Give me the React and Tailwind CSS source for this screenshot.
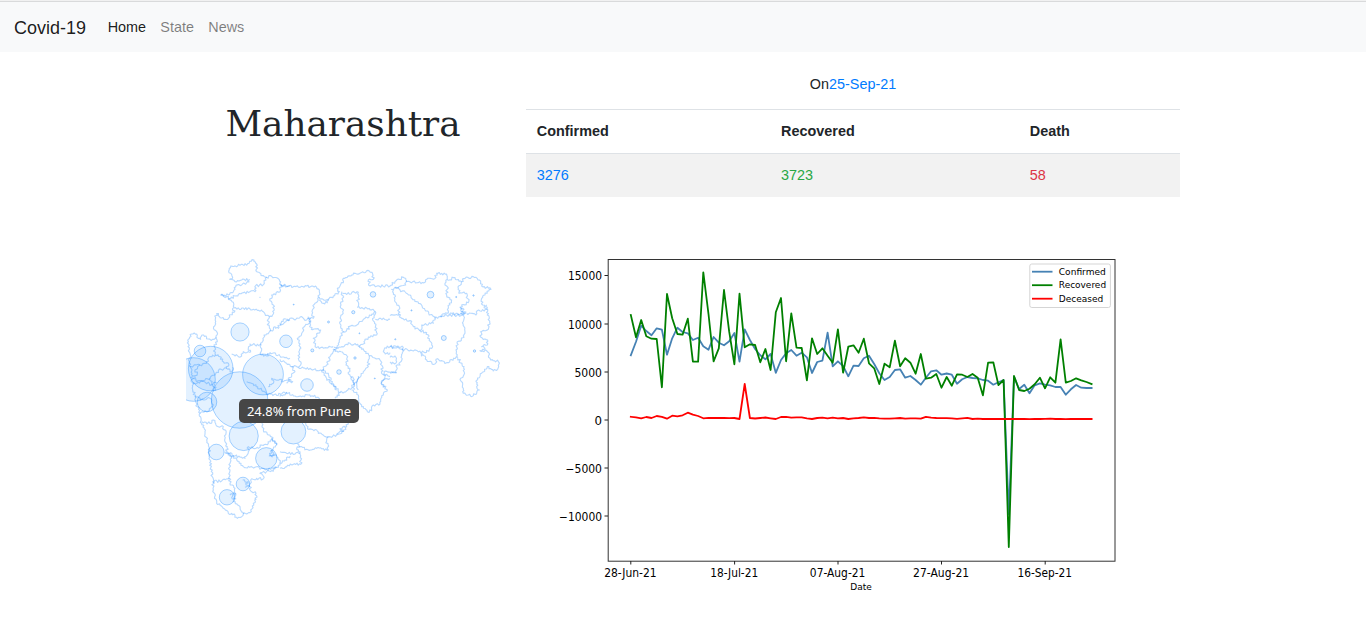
import React from "react";

const CONFIRMED = [
  355.3, 341.7, 325.7, 331, 335.3, 328.3, 329.7, 354.7, 338.3, 327.7, 332, 333.3, 340, 337.7, 346.3, 349.7, 337, 342.7,
  345.3, 341.3, 333, 361.7, 329.3, 340, 349, 355.3, 359.3, 354, 372.8, 360, 353.3, 350, 355.7, 352.7, 357.3, 373, 362,
  360.7, 332.7, 366.3, 361.3, 366, 376.3, 365.7, 366, 358.3, 355.7, 364, 373.3, 380, 377, 370, 369.3, 377.7, 376, 380,
  384.7, 377.7, 371.3, 370.3, 374.7, 373.5, 374.7, 383.7, 379.3, 377, 378, 378.3, 380, 380.7, 384.7, 382.3, 380, 514,
  376.7, 389, 384.7, 393.3, 385.3, 383.3, 384.7, 385.3, 387, 387, 394.7, 389.3, 385, 387.7, 388, 388,
];
const RECOVERED = [
  315, 337.3, 320, 336.3, 338.7, 339, 387.3, 294, 318.3, 334, 334.7, 318.7, 361.7, 361.7, 272.3, 314, 361.3, 348.3, 290,
  331.7, 364.3, 293.7, 347.3, 344.3, 345, 362.3, 349, 370, 312.3, 298, 361.3, 313.3, 347.7, 348, 380.3, 338.3, 354,
  348.3, 355.7, 362.7, 329.3, 372.7, 346.7, 345.3, 352.7, 338.7, 363.3, 368.3, 384, 363.7, 367.3, 340.7, 366.3, 358.3,
  362.7, 373.7, 354, 378.7, 377.7, 374, 387.7, 377, 385.7, 374.3, 374.7, 377, 374, 377.7, 395.3, 362.7, 362.3, 385, 380,
  547, 376, 390, 391, 388.7, 384.3, 377.7, 388.3, 377.3, 382.7, 339.3, 382.7, 381, 378.3, 380.3, 382, 384,
];
const DECEASED = [
  416.8, 417.4, 418.3, 417, 418, 416, 416.8, 418.7, 415.7, 416.3, 415.3, 412.7, 414.7, 416, 418.3, 417.8, 418, 418, 418,
  418.2, 418, 419, 384, 418, 418.5, 418, 417.5, 418.3, 419, 417, 416.9, 417.7, 417.4, 417.4, 418.3, 419, 418, 417.7,
  418.3, 417.7, 418.3, 418, 419, 418.3, 418, 417.4, 418, 417.8, 418.4, 418.7, 418.7, 418.3, 418, 418.6, 418.3, 418.3,
  418.7, 416.8, 417.6, 418, 418.2, 418.1, 418.3, 418.9, 418.4, 417.8, 419, 418.6, 419, 418.8, 419, 419, 418.8, 419, 419,
  419, 419, 419.2, 419, 419, 418.9, 418.7, 419, 419, 419.1, 418.8, 419, 419, 419, 419,
];

const toPoints = (values) => values.map((y, i) => `${(630.8 + i * 5.178).toFixed(1)},${y}`).join(" ");

// District borders, grouped into tiles: origin plus polylines in thirds of a pixel.
const TILES = [
  {
    at: [180, 250],
    lines: [
      "122,136 145,135 165,118 168,106 185,105 207,96 208,89 185,90 165,95 149,88 158,82 147,68 148,55 158,49 180,46 203,41 222,30 230,42 232,66 243,76 260,82 275,79 292,84 302,96 303,106 330,107",
      "145,150 165,138 190,128 225,125 227,107 250,104 260,82",
      "122,136 140,140 150,150 160,157 162,187 148,195 143,208 125,204 110,191 106,207 107,222 101,230 110,245 108,262 98,268 85,267 78,258 66,255 62,268 55,265 50,252 35,252 25,268 24,290 30,310 28,335 36,370 38,410",
      "163,175 190,174 220,178 245,180 255,192 268,200 280,192 280,165 270,152 275,135 300,125 303,106",
      "268,200 262,212 268,230 270,243 252,255 250,270 243,285 245,300 240,312",
      "243,283 225,285 210,282 205,295 212,306 190,305 185,318 165,318 155,312",
      "270,243 280,240 285,230 295,235 300,220 318,207 330,210",
      "108,262 112,275 103,290 106,315 85,325 80,340 60,345 30,350",
      "106,315 120,320 130,335 145,340 140,355 155,365 158,352",
      "60,345 45,360 52,372 40,385 50,395 90,385 105,375 115,362 140,355",
      "240,312 260,318 270,308 300,318 330,325",
      "265,410 280,400 275,385 300,388 310,395 330,388",
      "90,385 96,402 108,412 100,425",
    ],
  },
  {
    at: [280, 250],
    lines: [
      "0,102 5,107 40,110 80,108 110,112 118,125 117,142 105,160 97,180 100,205 80,210 65,200 45,210 30,205 0,225",
      "117,142 120,147 145,148 142,158 130,160 118,150",
      "145,148 160,138 178,125 172,115 190,98 190,85 215,75 225,70 268,63 278,72 280,88 265,90 270,108 330,108",
      "185,125 188,150 183,165 188,185 182,200 183,225 190,245 180,260 175,280 172,292 162,292",
      "188,130 213,132 216,127 235,127 233,172 260,174 282,182 286,192 278,210 287,228 290,255 270,262 255,268 250,282 240,287 245,298 258,305 268,318 265,350 250,365 235,385 230,405 235,420",
      "286,185 255,205 235,222 213,227 200,240 190,245",
      "286,208 330,208",
      "85,200 92,225 94,238 122,240 100,265 110,293 135,293 160,290",
      "92,205 85,222 70,232 65,250 52,265 60,290 55,325 62,345 55,352 90,355 125,362 140,385 160,405 170,420",
      "125,362 140,345 150,320 160,298 190,310 203,320 198,345 210,355 205,372 220,385 222,420",
      "162,298 185,290 210,280 240,287",
      "0,328 20,340 35,350 55,352",
      "35,350 45,365 25,385 38,395 20,400",
      "268,318 300,330 308,350 305,370 330,380",
      "330,290 315,293 310,305 325,313 330,308",
      "330,385 310,390 303,400 312,412",
    ],
  },
  {
    at: [390, 250],
    lines: [
      "0,108 15,95 40,82 47,85 47,105 15,112 5,118 15,135 15,155 28,170 25,190 35,205 60,212 70,230 90,242",
      "48,93 85,98 105,97 110,88 135,85 140,70 170,72 172,88 165,100 172,110 170,135 185,150 175,175 172,190 150,200 135,205",
      "15,112 30,120 60,135 80,155 105,180 135,205 130,220 95,225 90,242 110,248 125,285 125,295 105,308 70,303 38,298 0,290",
      "172,90 195,83 215,95 205,115 207,130 230,130 235,158 215,165 212,180 225,190 175,192",
      "212,172 222,178 214,186 228,186 222,193 212,190",
      "215,95 225,85 250,80 268,90 275,108 303,118 285,135 275,145 278,165 290,178 262,182 258,195 230,190",
      "150,197 220,195 222,230 222,262 202,275 198,300 203,322 180,330 170,338 138,328 135,342 110,330 105,318 95,318 97,308",
      "290,165 292,195 298,205 295,238 272,245 273,262 293,270 292,285 275,290 285,295 270,302 290,302 300,325 325,335 323,358 310,363 292,350 275,370 258,395 260,410 268,420 250,437 235,435 218,425 220,415 210,388 220,378 222,350 203,325",
      "0,290 20,290 40,292 35,318 30,345 18,348 18,368 0,370",
      "0,322 15,318 20,335 5,342 0,336",
      "0,197 28,195",
    ],
  },
  {
    at: [180, 380],
    lines: [
      "38,20 45,50 52,80 60,100 65,130 75,155 80,180 88,205 90,240 97,290 100,330 110,370 130,385 145,400 155,400 172,415 185,410 190,402 210,398 220,370 228,358 228,340 210,330 212,300 230,295 248,298 250,288 240,280 275,272 290,262 300,250",
      "66,125 90,130 100,120 115,140 130,140 138,160 135,185 142,200 140,218 155,230 150,250 148,290 150,310 165,325 165,350 160,365 180,380 190,402",
      "97,305 125,303 148,295",
      "135,215 165,228 195,235 205,215 205,200 235,205 245,195 265,190 275,175 290,195 280,205 270,225 290,228",
      "272,212 282,222 268,228 284,226",
      "145,222 170,235 190,260 225,262 260,268 290,262",
      "245,130 250,150 270,165 290,195",
      "150,345 166,340 155,352 168,358",
      "188,300 205,305 198,315 208,318 195,322",
      "290,230 305,250 315,240 330,228",
      "45,50 70,60 90,55 100,75 80,95 60,100",
      "38,10 70,4 95,14 110,8",
      "200,5 220,12 245,30 260,42 290,46 320,36",
    ],
  },
  {
    at: [280, 370],
    lines: [
      "0,80 20,68 45,78 65,80 85,75 115,82 120,90",
      "125,0 145,10 155,40 180,68 165,85",
      "180,68 215,55 222,40 215,20",
      "215,60 235,75 240,100 250,110 262,125 275,122 280,105 300,102 310,75 322,60 305,40 315,20 312,5 335,5 350,8",
      "235,18 232,30 220,45",
      "205,158 200,170 185,190 150,200 140,210 145,240 110,235 80,238 60,230 52,222",
      "75,158 85,178 110,180 115,190 145,200",
      "170,192 190,184 180,176 196,170",
      "60,230 50,235 60,250 62,283 40,283 20,290 0,295",
      "0,245 20,250 60,250",
    ],
  },
];

// Subdivides each border segment with a small repeatable offset so it reads as a natural boundary.
function roughen(line, seed) {
  let s = seed * 7919 + 17;
  const rand = () => {
    s = (s * 16807) % 2147483647;
    return s / 2147483647 - 0.5;
  };
  const pts = line.split(" ").map((p) => p.split(",").map(Number));
  const out = [pts[0]];
  for (let i = 1; i < pts.length; i++) {
    const [x0, y0] = pts[i - 1];
    const [x1, y1] = pts[i];
    const len = Math.hypot(x1 - x0, y1 - y0);
    const n = Math.max(1, Math.round(len / 4));
    for (let k = 1; k < n; k++) {
      const o = rand() * 8;
      const t = k / n;
      out.push([x0 + (x1 - x0) * t - ((y1 - y0) / len) * o, y0 + (y1 - y0) * t + ((x1 - x0) / len) * o]);
    }
    out.push([x1, y1]);
  }
  return out.map(([x, y]) => `${x.toFixed(1)},${y.toFixed(1)}`).join(" ");
}

const BUBBLES = [
  [239.6, 400, 28.2], [210.7, 368.6, 22.3], [193.5, 379.5, 21.8], [263, 374.5, 20.4], [207, 402, 9.8],
  [243.7, 436, 14.6], [216.3, 452, 7.8], [266.3, 458.3, 10.7], [243, 484, 6.8], [227, 497.3, 7.7],
  [286, 341.3, 6.3], [307, 385, 6.3], [293.4, 431.6, 12.4], [240, 332, 9.1], [200, 351, 5.8],
  [373, 294.4, 2.8], [353.3, 312.2, 1.6], [328.5, 322, 1], [293.7, 304.6, 0.5], [359.4, 333.3, 0.5],
  [312.3, 350.4, 1.5], [355, 358, 1.2], [339, 372, 2.3], [374.8, 378.4, 0.5], [430.5, 294.7, 3.4],
  [456.2, 297, 0.6], [473.5, 295.5, 0.7], [411.5, 310.4, 0.6], [395.3, 339.3, 0.6], [443.8, 338, 2.5],
  [474.5, 351, 1.2], [260, 297.2, 0.2],
];

const Y_TICKS = [
  [275.5, "15000", 568], [324, "10000", 568], [372, "5000", 574.5], [420, "0", 594.5],
  [468, "−5000", 565.5], [516, "−10000", 559],
];
const X_TICKS = [
  [630.8, "28-Jun-21", 52.5], [734.6, "18-Jul-21", 48], [838, "07-Aug-21", 55.5], [941.5, "27-Aug-21", 56], [1045.2, "16-Sep-21", 54.5],
];
const LEGEND = [
  [271.5, "Confirmed", "#4682b4", 47], [285, "Recovered", "#008000", 47.3], [298.5, "Deceased", "#ff0000", 44.5],
];

function StateMap() {
  return (
    <svg viewBox="186 250 314 276" className="block h-[276px] w-[314px] overflow-hidden">
      <g fill="none" stroke="#007bff" strokeOpacity="0.28" strokeWidth="3.4" strokeLinejoin="round">
        {TILES.map((tile, t) => (
          <g key={t} transform={`translate(${tile.at[0]} ${tile.at[1]}) scale(0.3333)`}>
            {tile.lines.map((line, i) => (
              <polyline key={i} points={roughen(line, t * 20 + i + 1)} />
            ))}
          </g>
        ))}
      </g>
      <g fill="#007bff" fillOpacity="0.11" stroke="#007bff" strokeOpacity="0.33" strokeWidth="1">
        {BUBBLES.map(([x, y, r], i) => (
          <circle key={i} cx={x} cy={y} r={r} />
        ))}
      </g>
    </svg>
  );
}

function TrendChart() {
  return (
    <svg viewBox="550 250 576 350" className="block h-[350px] w-[576px] font-['DejaVu_Sans',sans-serif]">
      <g fill="none" strokeWidth="1.8" strokeLinejoin="round" strokeLinecap="square">
        <polyline points={toPoints(CONFIRMED)} stroke="#4682b4" />
        <polyline points={toPoints(RECOVERED)} stroke="#008000" />
        <polyline points={toPoints(DECEASED)} stroke="#ff0000" />
      </g>
      <rect x="608.2" y="259.5" width="506.8" height="301.7" fill="none" stroke="#333" strokeWidth="1" />
      {Y_TICKS.map(([y, label, x]) => (
        <g key={label}>
          <path d={`M604.5 ${y}H608`} stroke="#222" />
          <text x={x} y={y + 4.5} fontSize="11.6" textLength={602 - x} lengthAdjust="spacingAndGlyphs">{label}</text>
        </g>
      ))}
      {X_TICKS.map(([x, label, w]) => (
        <g key={label}>
          <path d={`M${x} 561V564.5`} stroke="#222" />
          <text x={x - w / 2 - 0.4} y="577" fontSize="11.6" textLength={w} lengthAdjust="spacingAndGlyphs">{label}</text>
        </g>
      ))}
      <text x="850.3" y="589.6" fontSize="8.8" textLength="21.5" lengthAdjust="spacingAndGlyphs">Date</text>
      <rect x="1029.8" y="264" width="80.6" height="43.5" rx="2" fill="#fff" stroke="#d5d5d5" />
      {LEGEND.map(([y, label, color, w]) => (
        <g key={label}>
          <path d={`M1032 ${y + 0.2}H1052.5`} stroke={color} strokeWidth="1.8" />
          <text x="1058.8" y={y + 3} fontSize="9" textLength={w} lengthAdjust="spacingAndGlyphs">{label}</text>
        </g>
      ))}
    </svg>
  );
}

export default function App() {
  return (
    <div className="h-[641px] overflow-hidden bg-white font-['Liberation_Sans',Arial,sans-serif] text-[14.4px] leading-[21.6px] text-[#212529]">
      <nav className="flex h-[52px] items-center border-t border-[#f1f1f1] bg-[#f8f9fa] shadow-[inset_0_1px_0_#d9dadb] px-[14px] pt-[2px]">
        <a className="mr-[21.6px] pt-[2px] text-[18px] leading-[27px] text-black/90">Covid-19</a>
        <div className="flex gap-[14.3px]">
          <a className="text-black/90">Home</a>
          <a className="text-black/50">State</a>
          <a className="text-black/50">News</a>
        </div>
      </nav>

      <main className="flex gap-[26px] pl-[186px]">
        <section className="w-[314px] shrink-0">
          <h1 className="mt-[50px] h-[43px] text-center font-['DejaVu_Serif',serif] text-[35.8px] leading-[43px]">Maharashtra</h1>
          <div className="relative mt-[105px]">
            <StateMap />
            <div className="absolute left-[53px] top-[149px] flex h-[24px] w-[120px] items-center justify-center whitespace-nowrap rounded-[5px] bg-[#464646] font-['Noto_Sans',sans-serif] text-[13px] leading-[24px] text-white">
              24.8% from Pune
            </div>
          </div>
        </section>

        <section className="w-[654px] shrink-0 pt-[22px]">
          <p className="text-center">
            On<span className="text-[#007bff]">25-Sep-21</span>
          </p>
          <div className="mt-[13px] grid grid-cols-[244.3px_248.7px_161px] border-t border-[#dee2e6] font-bold">
            <div className="px-[10.8px] pt-[11.5px] pb-[9.9px]">Confirmed</div>
            <div className="px-[10.8px] pt-[11.5px] pb-[9.9px]">Recovered</div>
            <div className="px-[10.8px] pt-[11.5px] pb-[9.9px]">Death</div>
          </div>
          <div className="grid grid-cols-[244.3px_248.7px_161px] border-t border-[#dee2e6] bg-[#f2f2f2]">
            <div className="px-[10.8px] pt-[11.6px] pb-[10px] text-[#007bff]">3276</div>
            <div className="px-[10.8px] pt-[11.6px] pb-[10px] text-[#28a745]">3723</div>
            <div className="px-[10.8px] pt-[11.6px] pb-[10px] text-[#dc3545]">58</div>
          </div>
          <div className="ml-[24px] mt-[53px]">
            <TrendChart />
          </div>
        </section>
      </main>
    </div>
  );
}
